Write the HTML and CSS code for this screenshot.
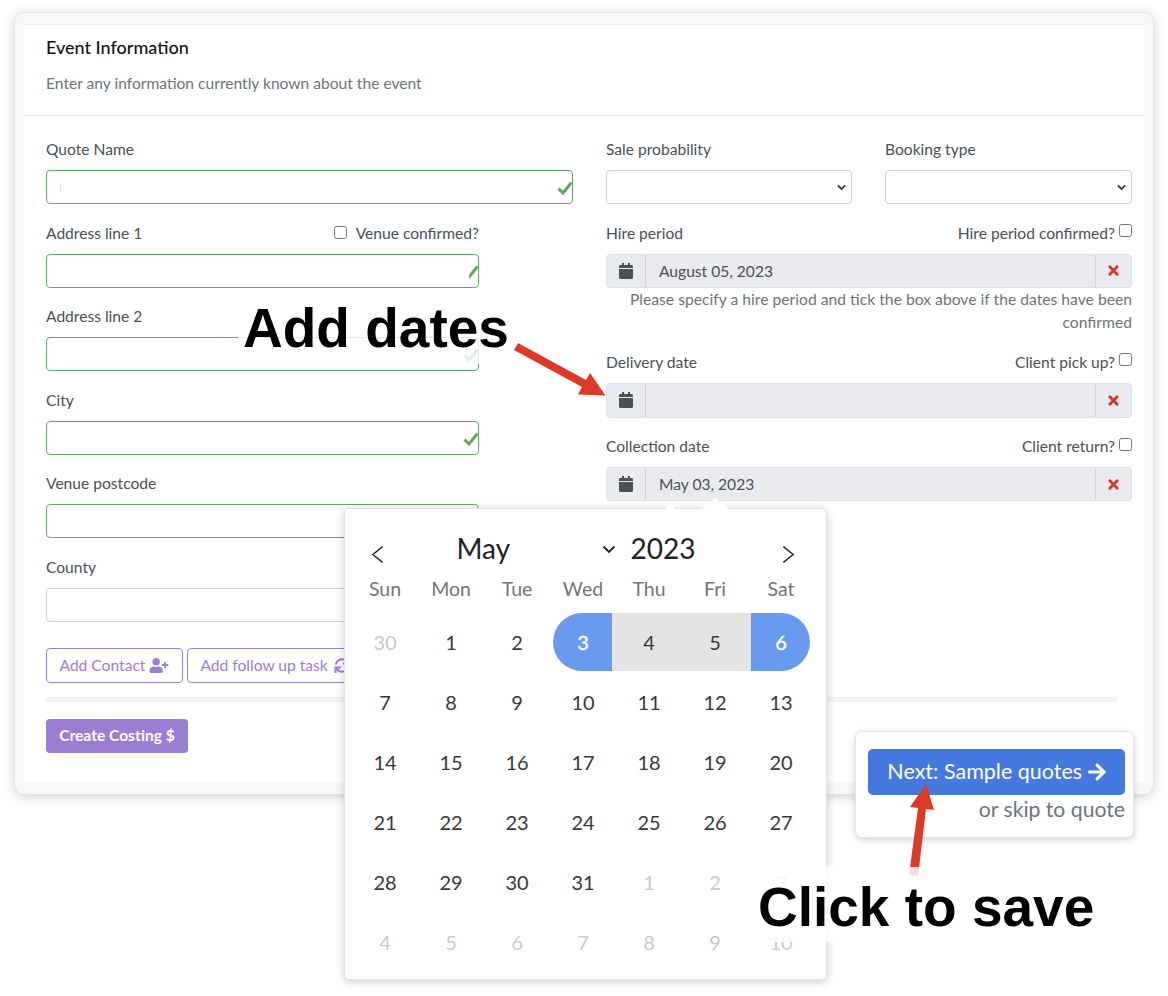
FILE: index.html
```html
<!DOCTYPE html>
<html lang="en">
<head>
    <meta charset="UTF-8">
    <title>Event Information</title>
    <link rel="stylesheet" href="styles.css">
</head>
<body>
    <svg class="icon-defs" width="0" height="0">
        <symbol id="i-cal" viewBox="0 0 448 512"><path d="M12 192h424c6.6 0 12 5.4 12 12v260c0 26.5-21.5 48-48 48H48c-26.5 0-48-21.5-48-48V204c0-6.6 5.4-12 12-12zm436-44v-36c0-26.5-21.5-48-48-48h-48V12c0-6.6-5.4-12-12-12h-40c-6.6 0-12 5.4-12 12v52H160V12c0-6.6-5.4-12-12-12h-40c-6.6 0-12 5.4-12 12v52H48C21.5 64 0 85.5 0 112v36c0 6.6 5.4 12 12 12h424c6.6 0 12-5.4 12-12z"/></symbol>
        <symbol id="i-x" viewBox="0 0 352 512"><path d="M242.72 256l100.07-100.07c12.28-12.28 12.28-32.19 0-44.48l-22.24-22.24c-12.28-12.28-32.19-12.28-44.48 0L176 189.28 75.93 89.21c-12.28-12.28-32.19-12.28-44.48 0L9.21 111.45c-12.28 12.28-12.28 32.19 0 44.48L109.28 256 9.21 356.07c-12.28 12.28-12.28 32.19 0 44.48l22.24 22.24c12.28 12.28 32.2 12.28 44.48 0L176 322.72l100.07 100.07c12.28 12.28 32.2 12.28 44.48 0l22.24-22.24c12.28-12.28 12.28-32.19 0-44.48L242.72 256z"/></symbol>
        <symbol id="i-tick" viewBox="0 0 16 16"><path d="M1.5 8.5 6 13 14.5 2.5" fill="none" stroke="currentColor" stroke-width="3"/></symbol>
    </svg>

    <main class="card">
        <section class="panel">
            <header class="panel-head">
                <h1>Event Information</h1>
                <p>Enter any information currently known about the event</p>
            </header>
            <div class="panel-body">
                <div class="columns">
                    <div class="col">
                        <div class="field">
                            <div class="label-row"><label>Quote Name</label></div>
                            <div class="input valid"><span class="cursor-mark"></span><svg class="tick"><use href="#i-tick"/></svg></div>
                        </div>
                        <div class="field short">
                            <div class="label-row"><label>Address line 1</label><label class="check-left"><input type="checkbox"> Venue confirmed?</label></div>
                            <div class="input valid"><svg class="tick clipped"><use href="#i-tick"/></svg></div>
                        </div>
                        <div class="field short">
                            <div class="label-row"><label>Address line 2</label></div>
                            <div class="input valid"><svg class="tick"><use href="#i-tick"/></svg></div>
                        </div>
                        <div class="field short">
                            <div class="label-row"><label>City</label></div>
                            <div class="input valid"><svg class="tick"><use href="#i-tick"/></svg></div>
                        </div>
                        <div class="field short">
                            <div class="label-row"><label>Venue postcode</label></div>
                            <div class="input valid"></div>
                        </div>
                        <div class="field short">
                            <div class="label-row"><label>County</label></div>
                            <div class="input"></div>
                        </div>
                        <div class="btn-row">
                            <button class="btn-outline">Add Contact <svg class="btn-icon" viewBox="0 0 640 512"><path d="M624 208h-64v-64c0-8.8-7.2-16-16-16h-32c-8.8 0-16 7.2-16 16v64h-64c-8.8 0-16 7.2-16 16v32c0 8.8 7.2 16 16 16h64v64c0 8.8 7.2 16 16 16h32c8.8 0 16-7.2 16-16v-64h64c8.8 0 16-7.2 16-16v-32c0-8.8-7.2-16-16-16zm-400 48c70.7 0 128-57.3 128-128S294.7 0 224 0 96 57.3 96 128s57.3 128 128 128zm89.6 32h-16.7c-22.2 10.2-46.9 16-72.9 16s-50.6-5.8-72.9-16h-16.7C60.2 288 0 348.2 0 422.4V464c0 26.5 21.5 48 48 48h352c26.5 0 48-21.5 48-48v-41.6c0-74.2-60.2-134.4-134.4-134.4z"/></svg></button>
                            <button class="btn-outline">Add follow up task <svg class="btn-icon" viewBox="0 0 512 512"><path d="M440.65 12.57l4 82.77A247.16 247.16 0 0 0 255.83 8C134.73 8 33.91 94.92 12.29 209.82A12 12 0 0 0 24.09 224h49.05a12 12 0 0 0 11.67-9.26 175.91 175.91 0 0 1 317-56.94l-101.46-4.86a12 12 0 0 0-12.57 12v47.41a12 12 0 0 0 12 12H500a12 12 0 0 0 12-12V12a12 12 0 0 0-12-12h-47.37a12 12 0 0 0-11.98 12.57zM255.83 432a175.61 175.61 0 0 1-146-77.8l101.8 4.87a12 12 0 0 0 12.57-12v-47.4a12 12 0 0 0-12-12H12a12 12 0 0 0-12 12V500a12 12 0 0 0 12 12h47.35a12 12 0 0 0 12-12.6l-4.15-82.57A247.17 247.17 0 0 0 255.83 504c121.11 0 221.93-86.92 243.55-201.82a12 12 0 0 0-11.8-14.18h-49.05a12 12 0 0 0-11.67 9.26A175.86 175.86 0 0 1 255.83 432z"/></svg></button>
                        </div>
                    </div>
                    <div class="col">
                        <div class="select-row">
                            <div class="field">
                                <div class="label-row"><label>Sale probability</label></div>
                                <select class="select"></select>
                            </div>
                            <div class="field">
                                <div class="label-row"><label>Booking type</label></div>
                                <select class="select"></select>
                            </div>
                        </div>
                        <div class="field hire">
                            <div class="label-row"><label>Hire period</label><label class="check-right">Hire period confirmed? <input type="checkbox"></label></div>
                            <div class="date-group">
                                <span class="date-cal"><svg><use href="#i-cal"/></svg></span>
                                <span class="date-value">August 05, 2023</span>
                                <span class="date-clear"><svg><use href="#i-x"/></svg></span>
                            </div>
                            <p class="help">Please specify a hire period and tick the box above if the dates have been confirmed</p>
                        </div>
                        <div class="field">
                            <div class="label-row"><label>Delivery date</label><label class="check-right">Client pick up? <input type="checkbox"></label></div>
                            <div class="date-group tall">
                                <span class="date-cal"><svg><use href="#i-cal"/></svg></span>
                                <span class="date-value"></span>
                                <span class="date-clear"><svg><use href="#i-x"/></svg></span>
                            </div>
                        </div>
                        <div class="field">
                            <div class="label-row"><label>Collection date</label><label class="check-right">Client return? <input type="checkbox"></label></div>
                            <div class="date-group">
                                <span class="date-cal"><svg><use href="#i-cal"/></svg></span>
                                <span class="date-value">May 03, 2023</span>
                                <span class="date-clear"><svg><use href="#i-x"/></svg></span>
                            </div>
                        </div>
                    </div>
                </div>
                <div class="rule"></div>
                <button class="btn-solid">Create Costing <b>$</b></button>
            </div>
        </section>
    </main>

    <div class="calendar">
        <div class="cal-head">
            <svg class="cal-prev" viewBox="0 0 14 20"><path d="M12.5 1.5 2 10l10.5 8.5" fill="none" stroke="#222" stroke-width="1.5"/></svg>
            <span class="cal-month">May</span>
            <svg class="cal-drop" viewBox="0 0 14 9"><path d="M1.5 1.5 7 7l5.5-5.5" fill="none" stroke="#222" stroke-width="1.8"/></svg>
            <span class="cal-year">2023</span>
            <svg class="cal-next" viewBox="0 0 14 20"><path d="M1.5 1.5 12 10 1.5 18.5" fill="none" stroke="#222" stroke-width="1.5"/></svg>
        </div>
        <div class="cal-weekdays">
            <span>Sun</span><span>Mon</span><span>Tue</span><span>Wed</span><span>Thu</span><span>Fri</span><span>Sat</span>
        </div>
        <div class="cal-days">
            <span class="off">30</span><span>1</span><span>2</span><span class="range-start">3</span><span class="in-range">4</span><span class="in-range">5</span><span class="range-end">6</span>
            <span>7</span><span>8</span><span>9</span><span>10</span><span>11</span><span>12</span><span>13</span>
            <span>14</span><span>15</span><span>16</span><span>17</span><span>18</span><span>19</span><span>20</span>
            <span>21</span><span>22</span><span>23</span><span>24</span><span>25</span><span>26</span><span>27</span>
            <span>28</span><span>29</span><span>30</span><span>31</span><span class="off">1</span><span class="off">2</span><span class="off">3</span>
            <span class="off">4</span><span class="off">5</span><span class="off">6</span><span class="off">7</span><span class="off">8</span><span class="off">9</span><span class="off">10</span>
        </div>
    </div>

    <aside class="next-panel">
        <button class="btn-next">Next: Sample quotes <svg viewBox="0 0 448 512"><path d="M190.5 66.9l22.2-22.2c9.4-9.4 24.6-9.4 33.9 0L441 239c9.4 9.4 9.4 24.6 0 33.9L246.6 467.3c-9.4 9.4-24.6 9.4-33.9 0l-22.2-22.2c-9.5-9.5-9.3-25 .4-34.3L311.4 296H24c-13.3 0-24-10.7-24-24v-32c0-13.3 10.7-24 24-24h287.4L190.9 101.2c-9.8-9.3-10-24.8-.4-34.3z"/></svg></button>
        <span class="skip">or skip to quote</span>
    </aside>

    <!-- screenshot annotations -->
    <svg class="arrows" viewBox="0 0 1168 996">
        <path d="M518 343 L586 380 L590 373 L605.5 395.5 L578 394.5 L582 387 L514 350 Z" fill="#dc3a26"/>
        <path d="M909 875 L918 808 L910 807 L926 784 L934 810 L926 809 L918 876 Z" fill="#dc3a26"/>
    </svg>
    <div class="note note-dates">Add dates</div>
    <div class="note note-save">Click to save</div>
</body>
</html>
```

FILE: styles.css
```css
* {
    box-sizing: border-box;
}
body {
    margin: 0;
    padding: 12px 14px 0;
    height: 996px;
    overflow: hidden;
    background-color: #fff;
    font-family: "Lato", "Open Sans", sans-serif;
    font-size: 15.6px;
    color: #4a5057;
}
.icon-defs {
    position: absolute;
}
.card {
    width: 1140px;
    height: 783px;
    padding: 11px 9px 12px 9px;
    background-color: #f7f8fa;
    border: 1px solid #e3e5e8;
    border-radius: 10px;
    box-shadow: 0 2px 12px rgba(0, 0, 0, 0.18);
}
.panel {
    height: 100%;
    background-color: #fff;
    border-top: 1px solid #eceef1;
}
.panel-head {
    height: 91px;
    padding: 12px 22px 0;
    border-bottom: 1px solid #e9ebee;
}
.panel-head h1 {
    margin: 0 0 15px;
    font-size: 18px;
    line-height: 21px;
    font-weight: 500;
    color: #111;
}
.panel-head p {
    margin: 0;
    line-height: 21px;
    color: #6c757d;
}
.panel-body {
    padding: 23px 12px 0 22px;
}
.columns {
    display: grid;
    grid-template-columns: 527px 526px;
    column-gap: 33px;
}
.label-row {
    display: flex;
    justify-content: space-between;
    align-items: center;
    height: 20px;
    margin-bottom: 11px;
}
.label-row label {
    display: flex;
    align-items: center;
    gap: 4px;
}
.check-left {
    gap: 9px !important;
}
.check-right input {
    position: relative;
    top: -2px;
}
.label-row input {
    appearance: none;
    width: 13px;
    height: 13px;
    margin: 0;
    background: #fff;
    border: 1px solid #767676;
    border-radius: 2.5px;
}
.field {
    margin-bottom: 18.6px;
}
.short {
    width: 433px;
}
.input {
    position: relative;
    height: 34px;
    border: 1px solid #ced4da;
    border-radius: 4px;
    background-color: #fff;
    overflow: hidden;
}
.valid {
    border-color: #5cab5e;
}
.tick {
    position: absolute;
    top: 9px;
    right: -1px;
    width: 16px;
    height: 16px;
    color: #5cab5e;
}
.clipped {
    clip-path: inset(0 0 0 38%);
}
.cursor-mark {
    position: absolute;
    left: 13px;
    top: 12px;
    width: 1px;
    height: 8px;
    background-color: #f5e2c4;
}
.btn-row {
    display: flex;
    gap: 4px;
    margin-top: 26px;
}
.btn-outline {
    height: 35px;
    padding: 0 12.5px;
    background-color: #fff;
    border: 1px solid #9b7dd4;
    border-radius: 4px;
    font: inherit;
    color: #9b7dd4;
    white-space: nowrap;
}
.btn-icon {
    width: 20px;
    height: 15px;
    vertical-align: -2px;
    fill: currentColor;
}
.btn-outline:last-child {
    width: 200px;
    text-align: left;
}
.select-row {
    display: grid;
    grid-template-columns: 246px 247px;
    column-gap: 33px;
}
.select {
    display: block;
    width: 100%;
    height: 34px;
    appearance: none;
    background: #fff url("data:image/svg+xml,%3Csvg xmlns='http://www.w3.org/2000/svg' viewBox='0 0 10 7'%3E%3Cpath d='M1 1.2l4 4 4-4' fill='none' stroke='%23333' stroke-width='1.9'/%3E%3C/svg%3E") no-repeat right 5px center / 9px 7px;
    border: 1px solid #ced4da;
    border-radius: 4px;
}
.date-group {
    display: flex;
    height: 34px;
    background-color: #e9ebef;
    border: 1px solid #dde0e4;
    border-radius: 4px;
    color: #495057;
}
.tall {
    height: 35px;
}
.date-cal {
    display: flex;
    align-items: center;
    justify-content: center;
    width: 39px;
    border-right: 1px solid #ced4da;
}
.date-cal svg {
    width: 14px;
    height: 16px;
    fill: #495057;
}
.date-value {
    flex: 1;
    padding-left: 13px;
    line-height: 33px;
}
.date-clear {
    display: flex;
    align-items: center;
    justify-content: center;
    width: 36px;
    border-left: 1px solid #ced4da;
}
.date-clear svg {
    width: 11px;
    height: 15px;
    fill: #d9302c;
}
.hire {
    margin-bottom: 0;
}
.help {
    margin: 0 0 17px;
    padding-left: 20px;
    font-size: 15.7px;
    line-height: 23.5px;
    text-align: right;
    color: #6c757d;
}
.rule {
    width: 1071px;
    height: 5px;
    margin: 14px 0 17px;
    background-color: #f1f2f3;
}
.btn-solid {
    display: block;
    width: 142px;
    height: 34px;
    padding: 0 0 2px;
    background-color: #9b7dd4;
    border: 0;
    border-radius: 4px;
    font: inherit;
    font-weight: 700;
    color: #fff;
}
.calendar {
    position: absolute;
    left: 344px;
    top: 508px;
    width: 483px;
    height: 472px;
    padding: 21px 9.5px 0;
    background-color: #fff;
    border: 1px solid #e3e3e3;
    border-radius: 5px;
    box-shadow: 0 2px 8px rgba(0, 0, 0, 0.2);
}
.calendar::before {
    content: "";
    position: absolute;
    left: 357px;
    top: -12px;
    border: solid transparent;
    border-width: 0 13px 12px;
    border-bottom-color: #fff;
}
.calendar::after {
    content: "";
    position: absolute;
    left: 320px;
    top: -5px;
    border: solid transparent;
    border-width: 0 5px 5px;
    border-bottom-color: #fff;
}
.cal-head {
    display: flex;
    align-items: center;
    height: 38px;
    font-size: 28px;
    color: #222;
}
.cal-prev, .cal-next {
    width: 13px;
    height: 19px;
    margin-top: 10px;
}
.cal-prev {
    margin-left: 16px;
}
.cal-month {
    margin-left: 73px;
    width: 145px;
    margin-top: -2px;
}
.cal-drop {
    width: 14px;
    height: 9px;
}
.cal-year {
    margin-left: 15px;
    margin-top: -2px;
}
.cal-next {
    margin-left: 87px;
}
.cal-weekdays, .cal-days {
    display: grid;
    grid-template-columns: repeat(7, 59px);
    column-gap: 7px;
}
.cal-weekdays {
    height: 40px;
    margin-bottom: 5px;
    align-items: center;
    font-size: 19.5px;
    text-align: center;
    color: #757575;
}
.cal-weekdays span {
    padding-left: 2px;
}
.cal-days {
    grid-auto-rows: 58px;
    row-gap: 2px;
    font-size: 20px;
    color: #393939;
}
.cal-days span {
    display: flex;
    align-items: center;
    justify-content: center;
    padding-left: 2px;
}
.cal-days .off {
    color: #c9c9c9;
}
.cal-days .range-start, .cal-days .range-end {
    background-color: #689bef;
    color: #fff;
    -webkit-text-stroke: 0.4px #fff;
}
.range-start {
    border-radius: 29px 0 0 29px;
}
.range-end {
    border-radius: 0 29px 29px 0;
}
.in-range {
    background-color: #e4e4e4;
    box-shadow: -7px 0 0 #e4e4e4, 7px 0 0 #e4e4e4;
}
.next-panel {
    position: absolute;
    left: 855px;
    top: 731px;
    width: 279px;
    height: 107px;
    padding: 17px 8px 0 12px;
    background-color: #fff;
    border: 1px solid #e4e4e4;
    border-radius: 7px;
    box-shadow: 0 2px 7px rgba(0, 0, 0, 0.18);
    text-align: right;
}
.btn-next {
    display: block;
    width: 257px;
    height: 46px;
    margin-bottom: 1px;
    padding: 0 0 3px;
    background-color: #4679e0;
    border: 0;
    border-radius: 5px;
    font: inherit;
    font-size: 21.5px;
    color: #fff;
}
.btn-next svg {
    width: 18px;
    height: 20px;
    vertical-align: -3px;
    fill: #fff;
}
.skip {
    font-size: 21.2px;
    color: #6c757d;
}
.arrows {
    position: absolute;
    left: 0;
    top: 0;
    width: 1168px;
    height: 996px;
}
.note {
    position: absolute;
    background-color: rgba(255, 255, 255, 0.82);
    font-family: "Liberation Sans", Arial, sans-serif;
    font-weight: 700;
    color: #000;
    white-space: nowrap;
}
.note-dates {
    left: 238px;
    top: 298px;
    width: 274px;
    height: 66px;
    padding-left: 5px;
    font-size: 55px;
    line-height: 60px;
}
.note-save {
    left: 746px;
    top: 867px;
    width: 358px;
    height: 75px;
    padding-left: 12px;
    font-size: 55px;
    line-height: 80px;
}
```
